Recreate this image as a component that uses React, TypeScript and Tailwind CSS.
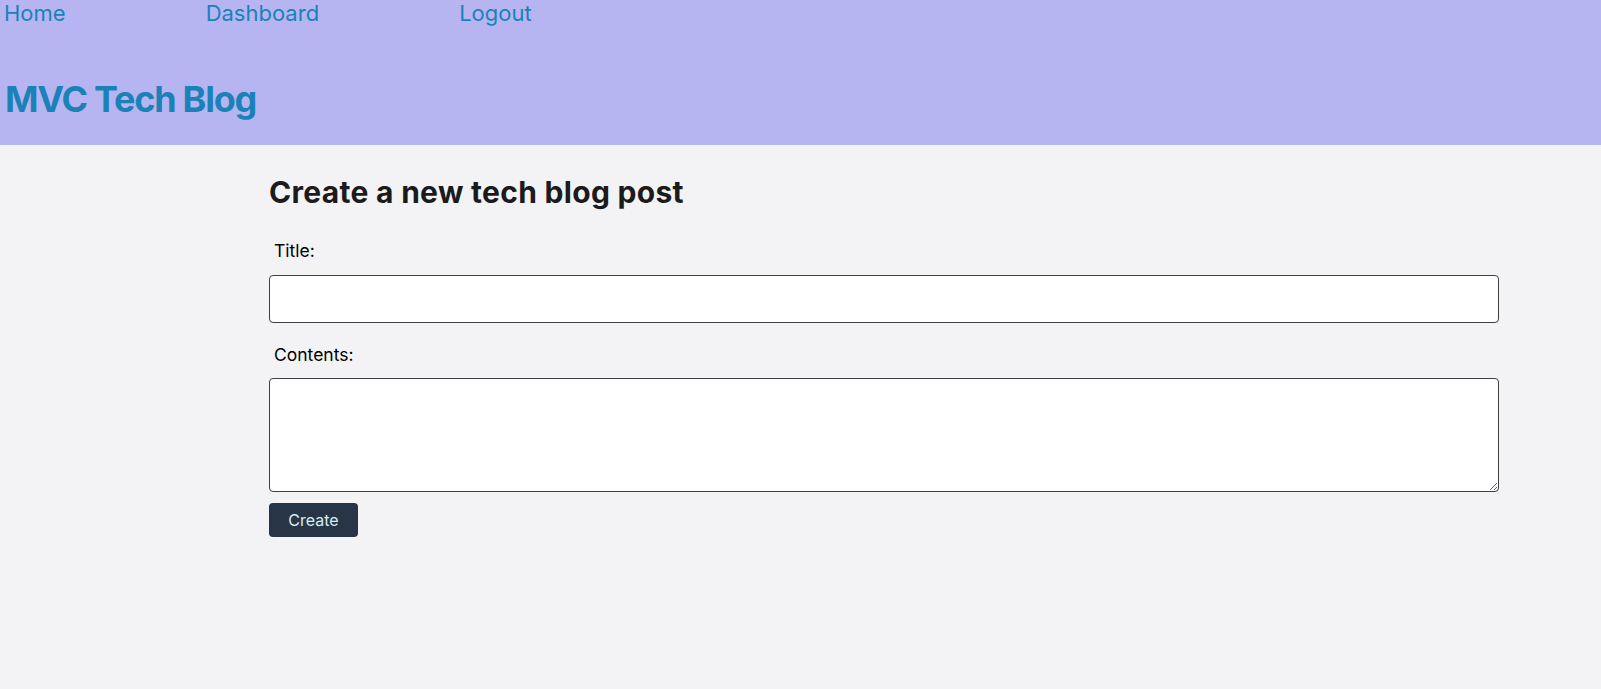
import React from 'react';

const links = ['Home', 'Dashboard', 'Logout'];

const App: React.FC = () => {
    return (
        <div className="min-h-screen bg-[#f3f3f5] font-['Inter',sans-serif]">
            {/* Header */}
            <header className="bg-[#b6b5f2] pl-[4px] pb-[26px]">
                <nav className="flex gap-[140px] text-[22px] leading-[27px] text-[#1b82b8]">
                    {links.map(link => (
                        <a key={link} href="#" className="hover:underline">{link}</a>
                    ))}
                </nav>
                <h1 className="mt-[52px] pl-[1px] text-[36px] leading-[40px] font-bold tracking-[-0.035em] text-[#1b82b8]">MVC Tech Blog</h1>
            </header>

            {/* New post form */}
            <main className="pl-[269px] pr-[102px] pt-[29px]">
                <h2 className="text-[30px] leading-[36px] font-bold tracking-[0.01em] text-[#1b1b1b]">Create a new tech blog post</h2>
                <form className="flex flex-col" onSubmit={e => e.preventDefault()}>
                    <label htmlFor="title" className="mt-[29px] pl-[5px] text-[17.5px] leading-[24px] text-black">Title:</label>
                    <input
                        id="title"
                        type="text"
                        className="mt-[12px] h-[48px] w-full rounded-[4px] border border-[#3f3f3f] bg-white px-2"
                    />
                    <label htmlFor="contents" className="mt-[20px] pl-[5px] text-[17.5px] leading-[24px] text-black">Contents:</label>
                    <textarea
                        id="contents"
                        className="mt-[11px] h-[114px] w-full rounded-[4px] border border-[#3f3f3f] bg-white px-2"
                    />
                    <div className="mt-[11px]">
                        <button
                            type="submit"
                            className="h-[34px] w-[89px] rounded-[4px] bg-[#283546] text-[16px] text-[#d6eef2]"
                        >
                            Create
                        </button>
                    </div>
                </form>
            </main>
        </div>
    );
};

export default App;
